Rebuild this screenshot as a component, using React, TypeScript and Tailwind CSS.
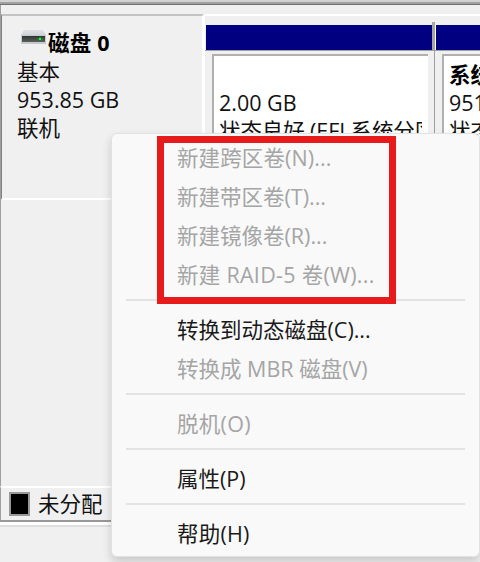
type LabelProps = { text: string; className?: string };

function Label({ text, className = "" }: LabelProps) {
  return (
    <span
      className={`block whitespace-pre font-['Open_Sans','Noto_Sans_CJK_SC',sans-serif] text-[21.5px] ${className}`}
    >
      {text}
    </span>
  );
}

function DiskIcon() {
  return (
    <svg width="25" height="16" viewBox="0 0 25 16" className="shrink-0">
      <defs>
        <linearGradient id="top" x1="0" y1="0" x2="0" y2="1">
          <stop offset="0" stopColor="#dfe1e5" />
          <stop offset="1" stopColor="#cfd2d7" />
        </linearGradient>
        <linearGradient id="face" x1="0" y1="0" x2="0" y2="1">
          <stop offset="0" stopColor="#303532" />
          <stop offset="1" stopColor="#5b605e" />
        </linearGradient>
      </defs>
      <path d="M3 1H22L25 6H0Z" fill="url(#top)" />
      <rect x="0" y="6" width="25" height="9" fill="#c6c9cf" />
      <rect x="1" y="7" width="23" height="6" fill="url(#face)" />
      <path d="M16 10H22M19 7.5V12.5" stroke="#168b28" strokeWidth="1.5" />
      <rect x="18" y="9" width="2" height="2" fill="#39e84b" />
    </svg>
  );
}

type Entry = { text: string; disabled?: boolean; tracking?: string };

const groups: Entry[][] = [
  [
    { text: "新建跨区卷(N)...", disabled: true, tracking: "tracking-[0.1px]" },
    { text: "新建带区卷(T)...", disabled: true },
    { text: "新建镜像卷(R)...", disabled: true },
    { text: "新建 RAID-5 卷(W)...", disabled: true, tracking: "tracking-[0.28px]" },
  ],
  [{ text: "转换到动态磁盘(C)..." }, { text: "转换成 MBR 磁盘(V)", disabled: true }],
  [{ text: "脱机(O)", disabled: true, tracking: "tracking-[0.3px]" }],
  [{ text: "属性(P)" }],
  [{ text: "帮助(H)", tracking: "tracking-[0.2px]" }],
];

function ContextMenu() {
  return (
    <div className="absolute left-[111px] top-[133px] h-[424px] w-[369px] rounded-[6px] border border-[#e2e2e2] bg-[#f9f9f9] pt-[4px] shadow-[0_5px_10px_rgba(0,0,0,0.16)]">
      {groups.map((group, i) => (
        <div key={i}>
          {i > 0 && (
            <div className="h-4 pl-[14px] pr-[14px] pt-[5px]">
              <div className="h-[2px] bg-[#e3e3e3]" />
            </div>
          )}
          {group.map((entry) => (
            <div key={entry.text} className="h-[39px] pl-[65px]">
              <Label
                text={entry.text}
                className={`leading-[39px] ${entry.tracking ?? ""} ${entry.disabled ? "text-[#a5a5a5]" : "text-[#191919]"}`}
              />
            </div>
          ))}
        </div>
      ))}
    </div>
  );
}

export default function App() {
  return (
    <div className="relative flex h-[562px] w-[480px] flex-col overflow-hidden bg-[#f0f0f0] text-[#111]">
      <div className="h-[2px] shrink-0 bg-[#d2d2d2]" />
      <div className="h-[2px] shrink-0 bg-[#a0a0a0]" />
      <div className="h-px shrink-0 bg-[#707070]" />
      <div className="flex h-[481px] shrink-0 border-l border-[#a0a0a0] pt-[9px]">
        <div className="w-[203px] shrink-0">
          <div className="h-[186px] border-b-2 border-l border-r-2 border-t-2 border-b-white border-l-[#808080] border-r-white border-t-[#c3c3c3] pl-[15px] pt-[13px]">
            <div className="flex h-[29px] items-start pl-[4px]">
              <DiskIcon />
              <Label text="磁盘 0" className="pl-[2px] font-bold leading-[28px] tracking-[0.2px] text-black" />
            </div>
            <Label text="基本" className="leading-[28px]" />
            <Label text="953.85 GB" className="leading-[28px]" />
            <Label text="联机" className="leading-[28px]" />
          </div>
        </div>
        <div className="min-w-0 flex-1 border-l border-t-2 border-white pt-[9px]">
          <div className="flex h-[26px] border-b border-[#a0a0a0] pl-px">
            <div className="w-[226px] shrink-0 bg-[#000080]" />
            <div className="-mt-[3px] w-[3px] shrink-0 bg-[#a6a6a6]" />
            <div className="w-px shrink-0 bg-white" />
            <div className="flex-1 bg-[#000080]" />
          </div>
          <div className="flex h-[100px]">
            <div className="w-[230px] shrink-0 border-r border-[#a0a0a0] pl-[7px] pr-[6px] pt-[3px]">
              <div className="h-[97px] border-l-2 border-t-2 border-[#b0b0b0] bg-white pl-[5px] pr-[6px] pt-[33px]">
                <Label text="2.00 GB" className="leading-[28px]" />
                <Label text="状态良好 (EFI 系统分区)" className="overflow-hidden leading-[28px] tracking-[-0.1px]" />
              </div>
            </div>
            <div className="min-w-0 flex-1 pl-[7px] pt-[3px]">
              <div className="h-[97px] overflow-hidden border-l-2 border-t-2 border-[#b0b0b0] bg-white pl-[5px] pt-[5px]">
                <Label text="系统 (C:)" className="font-bold leading-[28px] text-black" />
                <Label text="951.85 GB" className="leading-[28px]" />
                <Label text="状态良好" className="leading-[28px]" />
              </div>
            </div>
          </div>
        </div>
      </div>
      <div className="flex h-[36px] shrink-0 items-center border-b-2 border-l border-t-2 border-b-[#999] border-l-[#a0a0a0] border-t-white pl-[8px]">
        <div className="h-[24px] w-[21px] border-2 border-[#999] bg-black" />
        <Label text="未分配" className="pl-[8px] leading-[30px]" />
      </div>
      <div className="h-[3px] shrink-0 bg-white" />
      <div className="h-[2px] shrink-0 bg-[#dedede]" />
      <ContextMenu />
      <div className="absolute left-[157px] top-[136px] h-[168px] w-[239px] border-[7px] border-[#e71b1b]" />
    </div>
  );
}
